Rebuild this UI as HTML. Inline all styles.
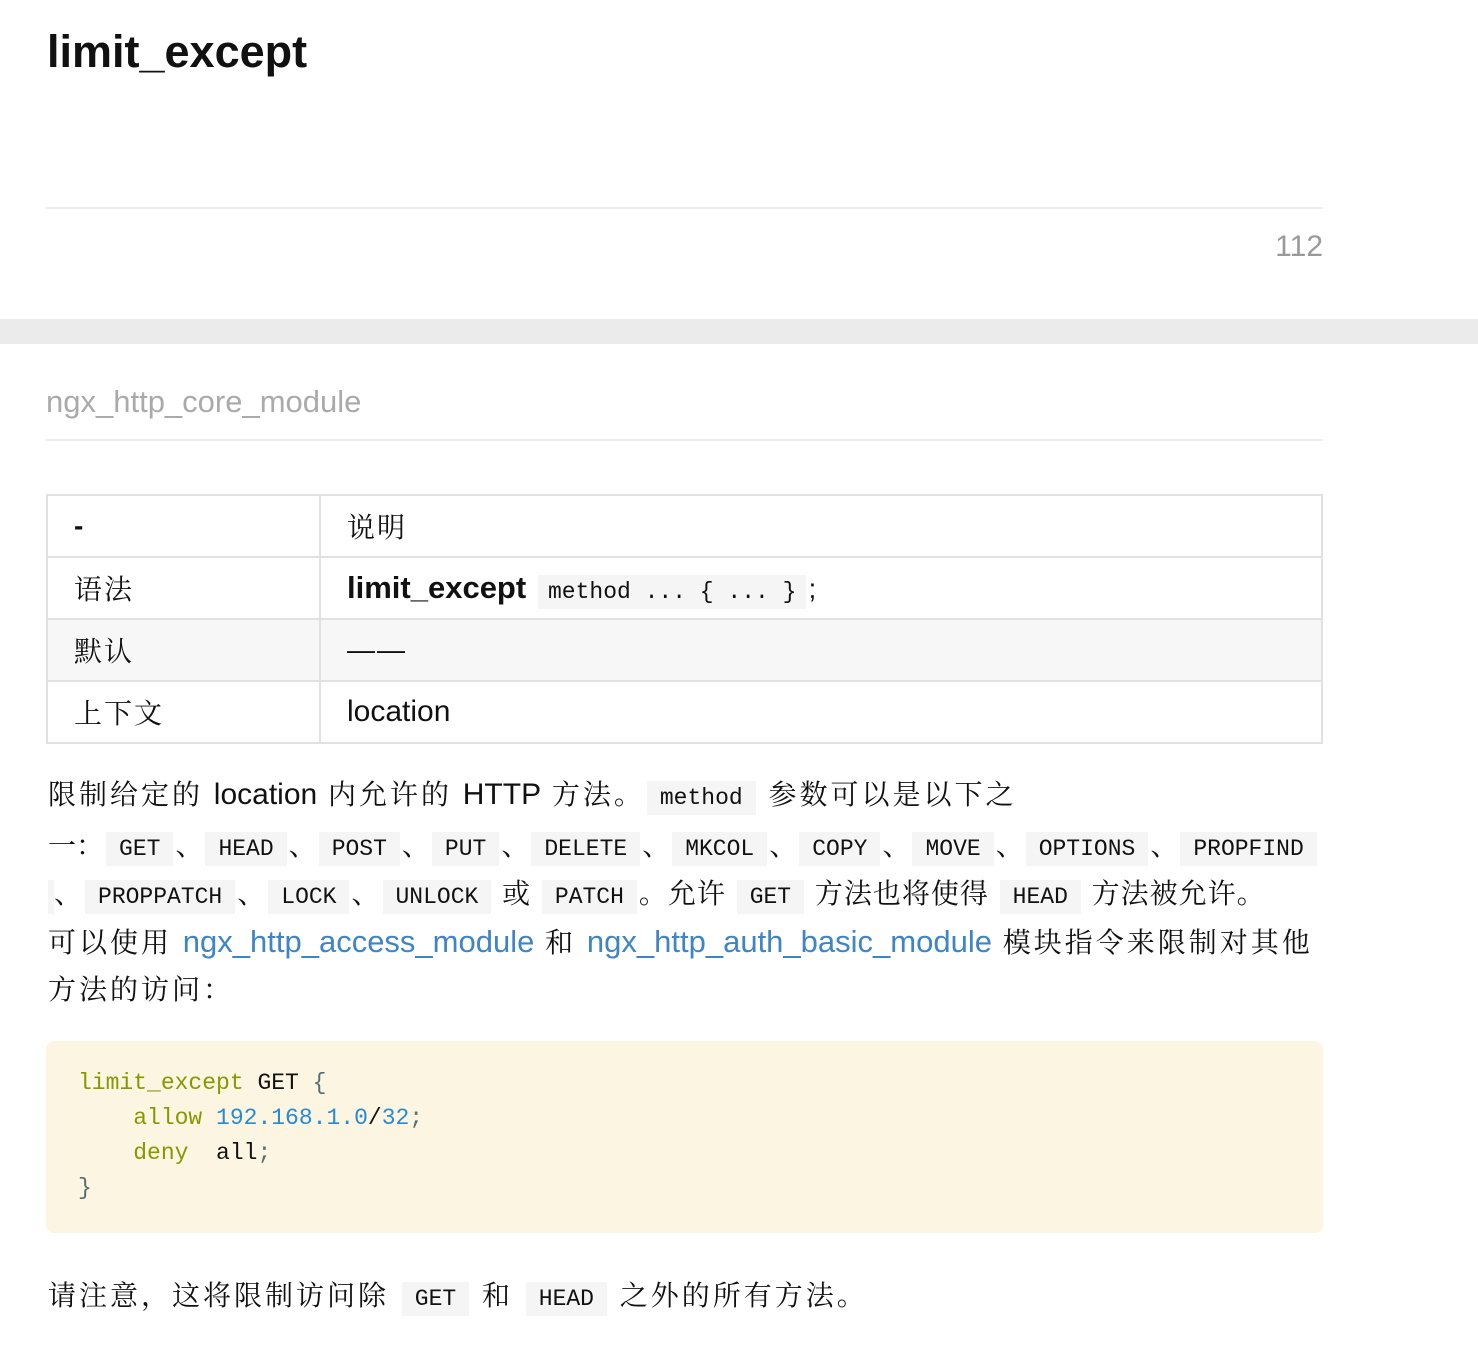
<!DOCTYPE html>
<html><head><meta charset="utf-8"><style>
body{margin:0;background:#fff;width:1478px;height:1352px;position:relative;overflow:hidden;font-family:"Liberation Sans","Noto Serif CJK SC",serif;color:#111}
.a{position:absolute;white-space:nowrap}
code,.m{font-family:"Liberation Mono",monospace}
.c{background:#f5f5f5;font-family:"Liberation Mono",monospace;font-size:23px;padding:4px 13px;margin:0 2px;letter-spacing:0}
.l{color:#3f84c6;letter-spacing:0}
.ln{position:absolute;white-space:nowrap;left:48px;font-size:28px;line-height:48px;letter-spacing:3px}
.ln .e{letter-spacing:0;font-size:30px}
table{position:absolute;left:46px;top:494px;width:1277px;border-collapse:collapse;font-size:28px}
td{border:2px solid #e1e1e1;height:62px;padding:0 26px;box-sizing:border-box;letter-spacing:2px}
tr:nth-child(3) td{background:#f7f7f7}
</style></head><body>
<div class="a" style="left:47px;top:26px;font-size:45px;font-weight:bold">limit_except</div>
<div class="a" style="left:46px;top:207px;width:1277px;height:2px;background:#eee"></div>
<div class="a" style="right:155px;top:230px;font-size:30px;color:#999">112</div>
<div class="a" style="left:0;top:319px;width:1478px;height:25px;background:#ebebeb"></div>
<div class="a" style="left:46px;top:384px;font-size:31px;color:#aaa">ngx_http_core_module</div>
<div class="a" style="left:46px;top:439px;width:1277px;height:2px;background:#eee"></div>
<table>
<tr><td style="width:273px;font-weight:bold">-</td><td>说明</td></tr>
<tr><td>语法</td><td><b style="font-size:31px;letter-spacing:0">limit_except</b> <span class="c" style="padding:4px 10px">method ... { ... }</span>;</td></tr>
<tr><td>默认</td><td>——</td></tr>
<tr><td>上下文</td><td style="font-size:30px;letter-spacing:0">location</td></tr>
</table>
<div class="ln" style="top:771px">限制给定的 <span class="e">location</span> 内允许的 <span class="e">HTTP</span> 方法。<span class="c">method</span> 参数可以是以下之</div>
<div class="ln" style="top:822px;letter-spacing:0">一：<span class="c">GET</span>、<span class="c">HEAD</span>、<span class="c">POST</span>、<span class="c">PUT</span>、<span class="c">DELETE</span>、<span class="c">MKCOL</span>、<span class="c">COPY</span>、<span class="c">MOVE</span>、<span class="c">OPTIONS</span>、<span class="c">PROPFIND</span></div>
<div class="ln" style="top:870px;letter-spacing:1px"><span class="c" style="padding:4px 3px;margin:0"></span>、<span class="c">PROPPATCH</span>、<span class="c">LOCK</span>、<span class="c">UNLOCK</span> 或 <span class="c">PATCH</span>。允许 <span class="c">GET</span> 方法也将使得 <span class="c">HEAD</span> 方法被允许。</div>
<div class="ln" style="top:918px">可以使用 <span class="l" style="font-size:31px">ngx_http_access_module</span> 和 <span class="l" style="font-size:31px">ngx_http_auth_basic_module</span> 模块指令来限制对其他</div>
<div class="ln" style="top:966px">方法的访问：</div>
<div class="a" style="left:46px;top:1041px;width:1277px;height:192px;background:#fcf5e2;border-radius:8px"></div>
<pre class="a m" style="white-space:pre;left:78px;top:1066px;margin:0;font-size:23px;line-height:35px;color:#111"><span style="color:#859900">limit_except</span> GET <span style="color:#586e75">{</span>
    <span style="color:#859900">allow</span> <span style="color:#268bd2">192.168.1.0</span>/<span style="color:#268bd2">32</span><span style="color:#586e75">;</span>
    <span style="color:#859900">deny</span>  all<span style="color:#586e75">;</span>
<span style="color:#586e75">}</span></pre>
<div class="ln" style="top:1272px">请注意，这将限制访问除 <span class="c">GET</span> 和 <span class="c">HEAD</span> 之外的所有方法。</div>
</body></html>
